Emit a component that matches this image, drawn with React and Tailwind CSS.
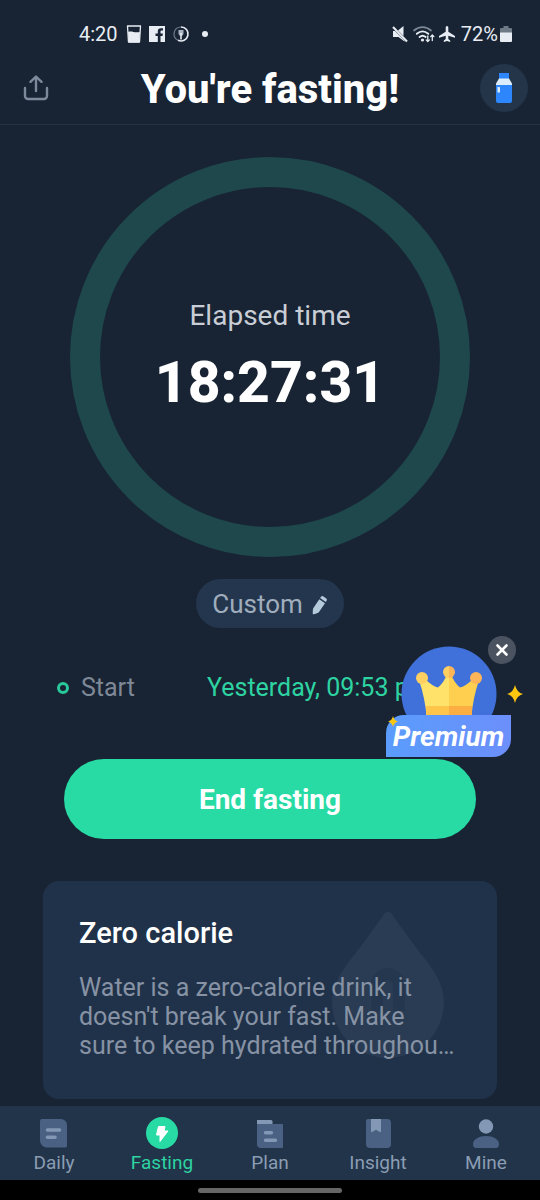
import { X } from 'lucide-react'

const TABS = [
  { id: 'daily', label: 'Daily', icon: DailyIcon },
  { id: 'fasting', label: 'Fasting', icon: FastingIcon },
  { id: 'plan', label: 'Plan', icon: PlanIcon },
  { id: 'insight', label: 'Insight', icon: InsightIcon },
  { id: 'mine', label: 'Mine', icon: MineIcon },
]

function DailyIcon() {
  return (
    <svg width="32" height="32" viewBox="0 0 32 32" fill="none">
      <path d="M4 2h19a6 6 0 0 1 6 6v21a1.500 1.500 0 0 1-1.500 1.500H9a7 7 0 0 1-7-7V4a2 2 0 0 1 2-2z" fill="#4b6184" />
      <path d="M9.500 13h12M9.500 20.300h7.500" stroke="#8398b4" strokeWidth="3.600" strokeLinecap="round" />
    </svg>
  )
}

function FastingIcon() {
  return (
    <svg width="32" height="32" viewBox="0 0 32 32">
      <circle cx="16" cy="16" r="16" fill="#28dba4" />
      <path d="M12.500 9.500h6.500l-1 4.500h4l-8 10.500V18h-3.500z" fill="#fff" stroke="#fff" strokeLinejoin="round" />
    </svg>
  )
}

function PlanIcon() {
  return (
    <svg width="32" height="32" viewBox="0 0 32 32" fill="none">
      <path d="M3 7h26v23a1 1 0 0 1-1 1H7a4 4 0 0 1-4-4z" fill="#4b6184" />
      <path d="M3 3h14a1.500 1.500 0 0 1 1.500 1.500V7H3z" fill="#8398b4" />
      <path d="M11.500 15.800h6M11.500 23.300h10" stroke="#8398b4" strokeWidth="3.400" strokeLinecap="round" />
    </svg>
  )
}

function InsightIcon() {
  return (
    <svg width="32" height="32" viewBox="0 0 32 32">
      <path d="M6 2h19a4 4 0 0 1 4 4v21a4 4 0 0 1-4 4H8a4 4 0 0 1-4-4V4a2 2 0 0 1 2-2z" fill="#4b6184" />
      <path d="M9 2h10v12.500a.8.8 0 0 1-1.200.600L14 12.800l-3.800 2.300a.8.800 0 0 1-1.200-.600z" fill="#8398b4" />
    </svg>
  )
}

function MineIcon() {
  return (
    <svg width="32" height="32" viewBox="0 0 32 32">
      <circle cx="16" cy="9.500" r="7.200" fill="#8398b4" />
      <path d="M3 27c0-4.500 6-8 13-8s13 3.500 13 8c0 2.500-1 4-3 4H6c-2 0-3-1.500-3-4z" fill="#4b6184" />
    </svg>
  )
}

function StatusBar() {
  return (
    <div className="flex h-[52px] items-center justify-between pt-4 pr-7 pl-[79px] text-xl text-[#e8edf3]">
      <div className="flex items-center gap-2">
        <span>4:20</span>
        <svg width="16" height="20" viewBox="0 0 16 20" fill="none">
          <path d="M1.500 2h13l-1 16h-11z" stroke="#e8edf3" strokeWidth="1.300" strokeLinejoin="round" />
          <path d="M2 8c4-1.500 6 1.200 12 0l-.8 10.500H2.800z" fill="#e8edf3" />
        </svg>
        <svg className="-ml-0.5" width="18" height="18" viewBox="0 0 18 18">
          <path d="M1 1h16v16h-4.500v-6h2l.4-2.600h-2.400V6.800c0-.9.400-1.300 1.300-1.300h1.200V3.200h-2c-2.200 0-3.200 1.200-3.200 3.200v2H7.500V11h2.300v6H1z" fill="#e8edf3" />
        </svg>
        <svg className="-ml-0.5" width="18" height="18" viewBox="0 0 18 18" fill="none">
          <path d="M9 2a7 7 0 1 1-3 13.300" stroke="#e8edf3" strokeWidth="1.600" />
          <path d="M6 15.300A7 7 0 0 1 9 2" stroke="#6f7c8c" strokeWidth="1.200" />
          <path d="M6.500 5v3.500a2.500 2.500 0 0 0 5 0V5z" fill="#aab4c0" />
          <path d="M9 8v6.500" stroke="#e8edf3" strokeWidth="1.600" />
        </svg>
        <span className="ml-1 size-1.5 rounded-full bg-[#e8edf3]" />
      </div>
      <div className="flex items-center gap-1">
        <svg width="18" height="18" viewBox="0 0 18 18">
          <path d="M2 6h2l9.500 9.500v1L7.500 12H2z" fill="#e8edf3" />
          <path d="M7 5.500 12.500 1v10z" fill="#e8edf3" />
          <path d="M2 2l14 14.500" stroke="#e8edf3" strokeWidth="2" />
        </svg>
        <svg width="22" height="18" viewBox="0 0 22 18" fill="none" strokeLinecap="round">
          <path d="M1 5.500c5-4.500 12-4.500 17 0" stroke="#7d8896" strokeWidth="1.700" />
          <path d="M3.800 8.800c3.500-3 8-3 11.500 0M6.500 12c2-1.600 4.300-1.600 6.200 0" stroke="#e8edf3" strokeWidth="1.800" />
          <circle cx="9.500" cy="15" r="1.600" fill="#e8edf3" />
          <path d="M14.800 11v5.500m-1.600-1.600 1.600 1.600 1.600-1.600M19.300 15.500V10m-1.600 1.600 1.600-1.600 1.600 1.600" stroke="#e8edf3" strokeWidth="1.300" />
        </svg>
        <svg width="16" height="16" viewBox="0 0 16 16">
          <path d="M8 0c.8 0 1.300.8 1.300 1.700V5.800L16 10v1.800L9.300 9.800v3.300l1.900 1.400V16L8 15.100 4.800 16v-1.500l1.900-1.400V9.800L0 11.800V10l6.700-4.200V1.700C6.700.8 7.200 0 8 0z" fill="#e8edf3" />
        </svg>
        <span className="ml-0.5">72%</span>
        <svg className="-ml-0.5" width="12" height="18" viewBox="0 0 12 18">
          <path d="M3.500 1h5v2H11a1 1 0 0 1 1 1v5H0V4a1 1 0 0 1 1-1h2.500z" fill="#6f7a87" />
          <path d="M0 7.500h12V16a1 1 0 0 1-1 1H1a1 1 0 0 1-1-1z" fill="#e8edf3" />
        </svg>
      </div>
    </div>
  )
}

function Header() {
  return (
    <header className="flex h-[73px] items-center justify-between border-b border-[#243342] px-3">
      <button type="button" aria-label="Share" className="flex size-12 items-center justify-center">
        <svg width="26" height="26" viewBox="0 0 26 26" fill="none" stroke="#7d8a9b" strokeWidth="2.400" strokeLinecap="round" strokeLinejoin="round">
          <path d="M2 13v8a3 3 0 0 0 3 3h16a3 3 0 0 0 3-3v-8" />
          <path d="M13 16V2M7.500 6.800 13 1.500l5.500 5.300" />
        </svg>
      </button>
      <h1 className="pt-1 text-[40px] font-extrabold text-white">You're fasting!</h1>
      <button type="button" aria-label="Water" className="flex size-12 items-center justify-center rounded-full bg-[#243449]">
        <svg width="18" height="32" viewBox="0 0 18 32">
          <path d="M4 1h10v6H4z" fill="#2d86fb" />
          <path d="M4 6.500h10l3 5V14H1v-2.500z" fill="#dcecfb" />
          <path d="M1 13h16v16a2 2 0 0 1-2 2H3a2 2 0 0 1-2-2z" fill="#2d86fb" />
          <rect x="2.500" y="15" width="2.500" height="5.500" rx=".6" fill="#dcecfb" />
        </svg>
      </button>
    </header>
  )
}

function ElapsedRing() {
  return (
    <div className="mx-auto mt-8 flex size-[400px] flex-col items-center rounded-full border-[30px] border-[#1e484b] pt-[111px]">
      <p className="text-[28px] leading-9 text-[#c9ced6]">Elapsed time</p>
      <p className="mt-4 text-[57px] leading-[66px] font-extrabold text-white">18:27:31</p>
    </div>
  )
}

function PremiumBadge() {
  return (
    <div className="absolute top-2 right-4 h-[122px] w-[138px]">
      <svg className="absolute inset-0" width="138" height="122" viewBox="0 0 138 122">
        <defs>
          <linearGradient id="banner" x1="0" x2="1" y1="0" y2="0">
            <stop offset="0" stopColor="#5a9cfc" />
            <stop offset="1" stopColor="#6c8ffb" />
          </linearGradient>
        </defs>
        <circle cx="63" cy="58" r="47.500" fill="#4071da" />
        {/* crown, left half light and right half shaded */}
        <path d="M33 44 39 43q7 7 13 8.500 6-5 9-13.500h2v42H40.500Q39 62 33 44z" fill="#ffe26a" />
        <path d="M93 44 87 43q-7 7-13 8.500-6-5-9-13.500h-2v42h22.500Q87 62 93 44z" fill="#ffd04f" />
        <path d="M40 70h23v10H40z" fill="#fec54a" />
        <path d="M63 70h23v10H63z" fill="#fdae42" />
        <circle cx="36" cy="42" r="6" fill="#ffcf62" />
        <circle cx="90" cy="42" r="6" fill="#feb557" />
        <path d="M63 30a6 6 0 0 0 0 12z" fill="#ffcf62" />
        <path d="M63 30a6 6 0 0 1 0 12z" fill="#feb557" />
        <path d="M18 79h107v24a18 18 0 0 1-18 18H0V97a18 18 0 0 1 18-18z" fill="url(#banner)" />
        <path d="M129 49q1.800 7.500 8 9-6.200 1.500-8 9-1.800-7.500-8-9 6.200-1.500 8-9z" fill="#fdc70f" />
        <path d="M7 80q1 4.500 5 5.500-4 1-5 5.500-1-4.500-5-5.500 4-1 5-5.500z" fill="#fdc70f" />
      </svg>
      <button type="button" aria-label="Close" className="absolute top-0 right-2 flex size-7 items-center justify-center rounded-full bg-[#4b5361] text-white">
        <X size={18} strokeWidth={3.5} />
      </button>
      <a href="#premium" className="absolute bottom-0 left-0 flex h-[43px] w-[125px] items-center justify-center text-[28px] font-bold text-white italic">
        Premium
      </a>
    </div>
  )
}

function TipCard() {
  return (
    <article className="relative mx-[43px] mt-[42px] h-[218px] rounded-2xl bg-[#20324a] px-9 pt-[34px]">
      <svg className="absolute top-[30px] right-[52px]" width="114" height="150" viewBox="0 0 114 150" fill="none">
        <path d="M54 2q3-3 6 0c10 14 23 32 37 50 10 13 16 26 16 39a56 56 0 0 1-112 0c0-13 6-26 16-39C31 34 44 16 54 2z" fill="#293c54" />
        <path d="M46 100V74a11 11 0 0 1 22 0v26" stroke="#24374f" strokeWidth="12" />
      </svg>
      <h2 className="relative text-[29px] leading-9 font-medium text-white">Zero calorie</h2>
      <p className="relative mt-[22px] text-[25px] leading-[29px] text-[#8793a4]">
        Water is a zero-calorie drink, it<br />
        doesn't break your fast. Make<br />
        sure to keep hydrated throughou…
      </p>
    </article>
  )
}

function TabBar() {
  return (
    <nav className="mt-auto bg-[#21344a]">
      <ul className="grid grid-cols-5">
        {TABS.map(({ id, label, icon: Icon }) => (
          <li key={id}>
            <a
              href={`#${id}`}
              className={`flex h-[74px] flex-col items-center pt-[11px] text-[19px] leading-7 ${id === 'fasting' ? 'text-[#2ed3a2]' : 'text-[#8b9db3]'}`}
            >
              <Icon />
              {label}
            </a>
          </li>
        ))}
      </ul>
      <div className="flex h-5 items-center justify-center bg-black">
        <span className="h-[5px] w-36 rounded-full bg-[#666]" />
      </div>
    </nav>
  )
}

export default function App() {
  return (
    <div className="flex min-h-screen flex-col bg-[#182434] font-[Roboto,sans-serif]">
      <StatusBar />
      <Header />
      <main>
        <ElapsedRing />
        <button type="button" className="mx-auto mt-[22px] flex h-[49px] items-center gap-2 rounded-full bg-[#23364e] px-4 pt-0.5 text-[26px] text-[#a0adbc]">
          Custom
          <svg width="17" height="20" viewBox="0 0 16 20" fill="#b5cadb">
            <path d="M9.500 1.800a1.500 1.500 0 0 1 2-.5l3.300 2.200a1.500 1.500 0 0 1 .4 2l-.9 1.400-5.700-3.800z" />
            <path d="m7.800 4.300 5.700 3.900-6 8.800q-.5.700-1.300 1L2.500 19.200a1 1 0 0 1-1.300-1l.2-3.800q0-.7.500-1.400z" />
          </svg>
        </button>
        <div className="relative">
          <dl className="flex h-[131px] items-center pb-3 pl-[57px] text-[25px] leading-8">
            <dt className="flex w-[150px] items-center gap-3 text-[#7f8896]">
              <span className="size-3 rounded-full border-3 border-[#28c99a]" />
              Start
            </dt>
            <dd className="text-[#2ed3a2]">Yesterday, 09:53 pm</dd>
          </dl>
          <PremiumBadge />
        </div>
        <button type="button" className="mx-16 flex h-20 w-[calc(100%-128px)] items-center justify-center rounded-full bg-[#28dba4] pt-0.5 text-[28px] font-bold text-white">
          End fasting
        </button>
        <TipCard />
      </main>
      <TabBar />
    </div>
  )
}
